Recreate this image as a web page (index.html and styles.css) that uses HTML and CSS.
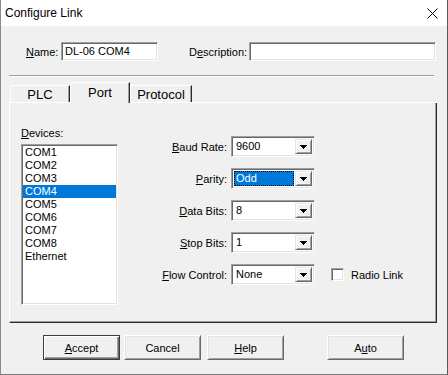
FILE: index.html
```html
<!DOCTYPE html>
<html lang="en">
<head>
    <meta charset="UTF-8">
    <title>Configure Link</title>
    <link rel="stylesheet" href="styles.css">
</head>
<body>
    <div class="window">
        <div class="titlebar">
            <span class="title">Configure Link</span>
            <svg class="close" width="11" height="11" viewBox="0 0 11 11">
                <path d="M0.5 0.5 L10.5 10.5 M10.5 0.5 L0.5 10.5" stroke="#000" stroke-width="1" fill="none"/>
            </svg>
        </div>

        <div class="name-row">
            <span class="lbl name-lbl"><u>N</u>ame:</span>
            <div class="field name-field">DL-06 COM4</div>
            <span class="lbl desc-lbl">D<u>e</u>scription:</span>
            <div class="field desc-field"></div>
        </div>
        <div class="separator"></div>

        <div class="tabs">
            <div class="tab">PLC</div>
            <div class="tab active">Port</div>
            <div class="tab wide">Protocol</div>
        </div>

        <div class="panel">
            <div class="devices">
                <div class="lbl devices-lbl"><u>D</u>evices:</div>
                <ul class="listbox">
                    <li>COM1</li>
                    <li>COM2</li>
                    <li>COM3</li>
                    <li class="sel">COM4</li>
                    <li>COM5</li>
                    <li>COM6</li>
                    <li>COM7</li>
                    <li>COM8</li>
                    <li>Ethernet</li>
                </ul>
            </div>

            <div class="settings">
                <span class="set-lbl"><u>B</u>aud Rate:</span>
                <div class="combo"><span class="value">9600</span><span class="arrow"><svg width="7" height="4" viewBox="0 0 7 4"><polygon points="0,0 7,0 3.5,4" fill="#000"/></svg></span></div>

                <span class="set-lbl"><u>P</u>arity:</span>
                <div class="combo"><span class="value focus">Odd</span><span class="arrow"><svg width="7" height="4" viewBox="0 0 7 4"><polygon points="0,0 7,0 3.5,4" fill="#000"/></svg></span></div>

                <span class="set-lbl"><u>D</u>ata Bits:</span>
                <div class="combo"><span class="value">8</span><span class="arrow"><svg width="7" height="4" viewBox="0 0 7 4"><polygon points="0,0 7,0 3.5,4" fill="#000"/></svg></span></div>

                <span class="set-lbl"><u>S</u>top Bits:</span>
                <div class="combo"><span class="value">1</span><span class="arrow"><svg width="7" height="4" viewBox="0 0 7 4"><polygon points="0,0 7,0 3.5,4" fill="#000"/></svg></span></div>

                <span class="set-lbl"><u>F</u>low Control:</span>
                <div class="combo"><span class="value">None</span><span class="arrow"><svg width="7" height="4" viewBox="0 0 7 4"><polygon points="0,0 7,0 3.5,4" fill="#000"/></svg></span></div>

                <div class="check"><span class="checkbox"></span>Radio Link</div>
            </div>
        </div>

        <div class="buttons">
            <div class="btn default"><u>A</u>ccept</div>
            <div class="btn cancel">Cancel</div>
            <div class="btn help"><u>H</u>elp</div>
            <div class="btn auto">A<u>u</u>to</div>
        </div>
    </div>
</body>
</html>
```

FILE: styles.css
```css
body {
    margin: 0;
    padding: 0;
    background-color: #f0f0f0;
}
.window {
    width: 448px;
    height: 375px;
    box-sizing: border-box;
    border-left: 1px solid #8a8a8a;
    border-right: 1px solid #5a5a5a;
    border-bottom: 1px solid #7a7a7a;
    background-color: #f0f0f0;
    font-family: "Liberation Sans", Arial, sans-serif;
    font-size: 11px;
    color: #000;
}
.titlebar {
    height: 26px;
    background-color: #fff;
    display: flex;
    align-items: center;
    justify-content: space-between;
    padding: 0 9px 0 4px;
}
.title {
    font-size: 12px;
}
.close {
    display: block;
    margin-top: 1px;
}
u {
    text-decoration: underline;
    text-underline-offset: 1px;
}

/* sunken edit fields */
.field,
.listbox,
.combo,
.checkbox {
    box-sizing: border-box;
    background-color: #fff;
    border: 1px solid;
    border-color: #a0a0a0 #fff #fff #a0a0a0;
    box-shadow: inset 1px 1px #696969, inset -1px -1px #e3e3e3;
}
.name-row {
    display: flex;
    align-items: center;
    height: 19px;
    padding: 16px 0 0 25px;
}
.name-lbl {
    width: 35px;
}
.desc-lbl {
    width: 60px;
    margin-left: 31px;
}
.field {
    height: 19px;
    line-height: 17px;
    padding: 0 3px;
}
.name-field {
    width: 97px;
}
.desc-field {
    width: 187px;
}
.separator {
    margin: 14px 0 0 8px;
    width: 425px;
    height: 1px;
    background-color: #a0a0a0;
    border-bottom: 1px solid #fff;
}

/* tabs */
.tabs {
    display: flex;
    align-items: flex-start;
    margin: 5px 0 0 8px;
    padding-left: 1px;
    width: 428px;
    height: 21px;
    box-sizing: border-box;
    box-shadow: inset 0 -1px #fff;
}
.tab {
    margin-top: 3px;
    width: 60px;
    height: 17px;
    box-sizing: border-box;
    border-top: 1px solid #fff;
    border-left: 1px solid #fff;
    border-right: 1px solid #2b2b2b;
    border-top-left-radius: 2px;
    box-shadow: inset -1px 0 #a0a0a0;
    display: flex;
    align-items: center;
    justify-content: center;
    font-size: 13px;
    background-color: #f0f0f0;
}
.tab.active {
    margin-top: 0;
    height: 21px;
    padding-bottom: 1px;
}
.tab.wide {
    width: 62px;
}

/* panel */
.panel {
    display: flex;
    margin-left: 8px;
    width: 428px;
    height: 220px;
    box-sizing: border-box;
    padding: 24px 0 0 11px;
    border-left: 1px solid #fff;
    border-right: 1px solid #2b2b2b;
    border-bottom: 1px solid #2b2b2b;
    box-shadow: inset -1px -1px #a0a0a0;
}
.devices {
    width: 97px;
}
.devices-lbl {
    line-height: 13px;
    margin-bottom: 4px;
}
.listbox {
    list-style: none;
    margin: 0;
    padding: 1px;
    height: 161px;
}
.listbox li {
    height: 13px;
    line-height: 13px;
    padding-left: 2px;
}
.listbox li.sel {
    background-color: #0078d7;
    color: #fff;
}
.settings {
    display: grid;
    grid-template-columns: 97px 84px auto;
    grid-auto-rows: 21px;
    column-gap: 4px;
    row-gap: 11px;
    align-items: center;
    margin: 9px 0 0 12px;
    align-self: flex-start;
}
.set-lbl {
    grid-column: 1;
    text-align: right;
}
.combo {
    grid-column: 2;
    display: flex;
    height: 21px;
    padding: 2px;
}
.combo .value {
    flex: 1;
    padding-left: 2px;
    line-height: 15px;
    margin-right: 1px;
}
.combo .value.focus {
    background-color: #0078d7;
    color: #fff;
    outline: 1px dotted #000;
    outline-offset: -1px;
}
.combo .arrow {
    width: 17px;
    box-sizing: border-box;
    background-color: #f0f0f0;
    border: 1px solid;
    border-color: #e3e3e3 #696969 #696969 #e3e3e3;
    box-shadow: inset 1px 1px #fff, inset -1px -1px #a0a0a0;
    display: flex;
    align-items: center;
    justify-content: center;
}
.combo .arrow svg {
    display: block;
    shape-rendering: crispEdges;
}
.check {
    grid-column: 3;
    grid-row: 5;
    display: flex;
    align-items: center;
    gap: 7px;
    margin-left: 12px;
}
.checkbox {
    width: 13px;
    height: 13px;
}

/* buttons */
.buttons {
    display: flex;
    margin: 12px 0 0 42px;
}
.btn {
    width: 77px;
    height: 25px;
    box-sizing: border-box;
    display: flex;
    align-items: center;
    justify-content: center;
    background-color: #f0f0f0;
    border: 1px solid;
    border-color: #fff #696969 #696969 #fff;
    box-shadow: inset 1px 1px #e3e3e3, inset -1px -1px #a0a0a0;
}
.btn.default {
    border-color: #3c3c3c;
    box-shadow: inset 1px 1px #fff, inset -1px -1px #696969, inset -2px -2px #a0a0a0;
}
.btn.cancel {
    margin-left: 4px;
}
.btn.help {
    margin-left: 6px;
}
.btn.auto {
    margin-left: 43px;
}
```
